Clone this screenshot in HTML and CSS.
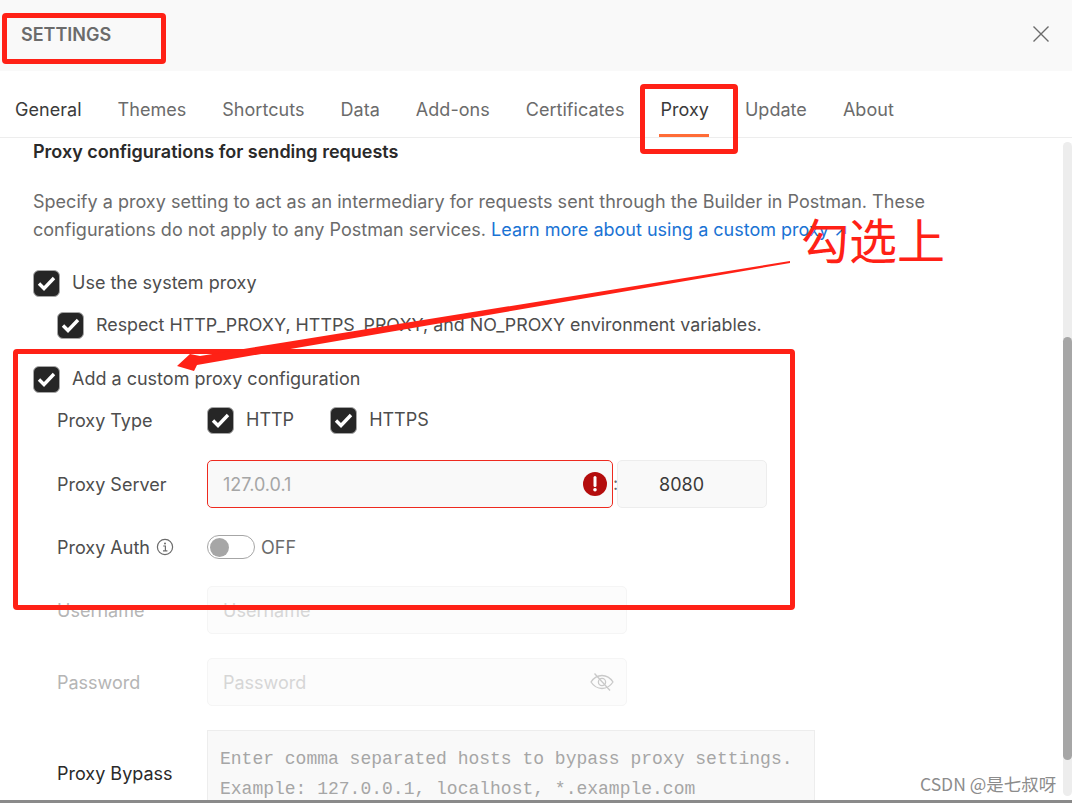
FILE: index.html
```html
<!DOCTYPE html>
<html lang="en">
<head>
<meta charset="utf-8">
<title>Settings</title>
<link rel="stylesheet" href="styles.css">
</head>
<body>
<div class="app">
  <header class="header">
    <span class="title">SETTINGS</span>
    <svg class="close" width="18" height="18" viewBox="0 0 18 18"><path d="M1.500 1.500 16.500 16.500M16.500 1.500 1.500 16.500" stroke="#6b6b6b" stroke-width="1.400" fill="none"/></svg>
  </header>
  <nav class="tabs">
    <a class="tab tab-first">General</a>
    <a class="tab">Themes</a>
    <a class="tab">Shortcuts</a>
    <a class="tab">Data</a>
    <a class="tab">Add-ons</a>
    <a class="tab">Certificates</a>
    <a class="tab tab-active">Proxy</a>
    <a class="tab">Update</a>
    <a class="tab">About</a>
  </nav>
  <main class="content">
    <h2 class="heading">Proxy configurations for sending requests</h2>
    <p class="desc">Specify a proxy setting to act as an intermediary for requests sent through the Builder in Postman. These configurations do not apply to any Postman services. <a class="link">Learn more about using a custom proxy ↗</a></p>
    <label class="check check-system"><span class="box"><svg width="25" height="25" viewBox="0 0 25 25"><path d="M5 12.500 10 17.500 20 7" stroke="#fff" stroke-width="3.400" fill="none"/></svg></span>Use the system proxy</label>
    <label class="check check-respect"><span class="box"><svg width="25" height="25" viewBox="0 0 25 25"><path d="M5 12.500 10 17.500 20 7" stroke="#fff" stroke-width="3.400" fill="none"/></svg></span>Respect HTTP_PROXY, HTTPS_PROXY, and NO_PROXY environment variables.</label>
    <label class="check check-custom"><span class="box"><svg width="25" height="25" viewBox="0 0 25 25"><path d="M5 12.500 10 17.500 20 7" stroke="#fff" stroke-width="3.400" fill="none"/></svg></span>Add a custom proxy configuration</label>
    <div class="form">
      <div class="row row-type">
        <span class="label">Proxy Type</span>
        <div class="types">
          <label class="check"><span class="box"><svg width="25" height="25" viewBox="0 0 25 25"><path d="M5 12.500 10 17.500 20 7" stroke="#fff" stroke-width="3.400" fill="none"/></svg></span>HTTP</label>
          <label class="check"><span class="box"><svg width="25" height="25" viewBox="0 0 25 25"><path d="M5 12.500 10 17.500 20 7" stroke="#fff" stroke-width="3.400" fill="none"/></svg></span>HTTPS</label>
        </div>
      </div>
      <div class="row row-server">
        <span class="label">Proxy Server</span>
        <div class="input input-error"><span class="ph">127.0.0.1</span>
          <svg class="err" width="26" height="26" viewBox="0 0 26 26"><circle cx="13" cy="13" r="12" fill="#b40d0d"/><path d="M13 6.500v8" stroke="#fff" stroke-width="3" stroke-linecap="round"/><circle cx="13" cy="18.700" r="1.800" fill="#fff"/></svg>
        </div>
        <span class="colon">:</span>
        <div class="input input-port">8080</div>
      </div>
      <div class="row row-auth">
        <span class="label">Proxy Auth <svg class="info" width="18" height="18" viewBox="0 0 18 18"><circle cx="9" cy="9" r="7.600" fill="none" stroke="#6b6b6b" stroke-width="1.200"/><path d="M7.200 8h2.200v4.600M7 12.800h4.400" stroke="#6b6b6b" stroke-width="1.200" fill="none"/><circle cx="9" cy="5.500" r="1" fill="#6b6b6b"/></svg></span>
        <span class="toggle"><span class="knob"></span></span>
        <span class="off">OFF</span>
      </div>
      <div class="row row-user disabled">
        <span class="label">Username</span>
        <div class="input input-wide"><span class="ph">Username</span></div>
      </div>
      <div class="row row-pass disabled">
        <span class="label">Password</span>
        <div class="input input-wide"><span class="ph">Password</span>
          <svg class="eye" width="24" height="20" viewBox="0 0 24 20"><path d="M1 10C4 5.500 8 3.500 12 3.500S20 5.500 23 10C20 14.500 16 16.500 12 16.500S4 14.500 1 10Z" fill="none" stroke="#c9c9c9" stroke-width="1.300"/><circle cx="12" cy="10" r="3.600" fill="none" stroke="#c9c9c9" stroke-width="1.300"/><path d="M4.500 1.500 20 18.500" stroke="#c9c9c9" stroke-width="1.300"/></svg>
        </div>
      </div>
      <div class="row row-bypass">
        <span class="label label-dark">Proxy Bypass</span>
        <div class="textarea">Enter comma separated hosts to bypass proxy settings.<br>Example: 127.0.0.1, localhost, *.example.com</div>
      </div>
    </div>
  </main>
  <div class="scrolltrack"><div class="scrollthumb"></div></div>
  <div class="bottomline"></div>
</div>
<div class="mark mark-title"></div>
<div class="mark mark-tab"></div>
<div class="mark mark-form"></div>
<svg class="arrow" width="630" height="120" viewBox="0 0 630 120"><polygon points="620,6 30,101 20,99 7,111 24,116 27,110 620,8" fill="#ff2116"/></svg>
<span class="note">勾选上</span>
<span class="watermark">CSDN @是七叔呀</span>
</body>
</html>
```
FILE: styles.css
```css
* { box-sizing: border-box; }
html, body { margin: 0; height: 803px; overflow: hidden; background: #fff; }
body { font-family: Inter, "Noto Sans CJK SC", sans-serif; font-size: 18px; color: #6b6b6b; position: relative; }
.app { position: relative; width: 1072px; height: 803px; overflow: hidden; display: flex; flex-direction: column; }
.header { height: 71px; flex: none; background: #f9f9f9; display: flex; justify-content: space-between; align-items: flex-start; padding: 25px 22px 0 21px; }
.title { font-weight: 600; line-height: 20px; color: #6b6b6b; }
.tabs { height: 67px; flex: none; border-bottom: 1px solid #ededed; display: flex; gap: 36px; padding-left: 15px; }
.tab { height: 66px; line-height: 77px; color: #6b6b6b; letter-spacing: 0.035px; }
.tab-first { color: #3a3a3a; }
.tab-active { color: #3a3a3a; position: relative; }
.tab-active::after { content: ""; position: absolute; left: -1px; right: 0; bottom: 0; height: 3px; background: #ff6c37; }
.content { flex: 1; padding: 0 0 0 33px; min-height: 0; }
.heading { margin: 4px 0 0; font-size: 18px; line-height: 20px; font-weight: 600; color: #2a2a2a; }
.desc { margin: 26px 0 0; width: 930px; line-height: 28px; letter-spacing: 0.020px; }
.link { color: #1a73d4; letter-spacing: 0; }
.check { display: flex; align-items: center; gap: 12px; color: #4d4d4d; line-height: 28px; }
.check-system { margin-top: 25px; height: 28px; }
.check-respect { margin: 14px 0 0 24px; height: 28px; font-size: 17.850px; }
.check-custom { margin-top: 26px; height: 28px; }
.box { width: 27px; height: 27px; flex: none; border-radius: 6px; background: #262626; border: 1px solid #a6a6a6; display: flex; align-items: center; justify-content: center; }
.box svg { flex: none; }
.form { padding-left: 24px; }
.row { display: flex; align-items: center; }
.label { width: 150px; flex: none; color: #4d4d4d; display: flex; align-items: center; gap: 6px; }
.row-type { margin-top: 13px; height: 28px; }
.types { display: flex; gap: 36px; }
.row-server { margin-top: 26px; height: 48px; }
.input { position: relative; height: 48px; border-radius: 5px; background: #f9f9f9; border: 1px solid #ededed; display: flex; align-items: center; padding-left: 15px; }
.input-error { width: 406px; border-color: #ee2a1f; }
.ph { color: #a6a6a6; }
.err { position: absolute; right: 4px; top: 10px; }
.colon { width: 4px; line-height: 48px; }
.input-port { width: 150px; padding-left: 41px; color: #3a3a3a; }
.row-auth { margin-top: 15px; height: 48px; }
.toggle { width: 48px; height: 24px; border-radius: 12px; border: 1px solid #a6a6a6; display: flex; align-items: center; padding-left: 2px; }
.knob { width: 19px; height: 19px; border-radius: 50%; background: #a6a6a6; }
.off { margin-left: 6px; color: #6b6b6b; }
.info { flex: none; }
.row-user { margin-top: 15px; height: 48px; }
.row-pass { margin-top: 24px; height: 48px; }
.input-wide { width: 420px; background: #fcfcfc; border-color: #f5f5f5; }
.disabled .label { color: #b5b5b5; }
.disabled .ph { color: #d6d6d6; }
.eye { position: absolute; right: 12px; top: 13px; }
.row-bypass { margin-top: 24px; height: 120px; align-items: flex-start; }
.row-bypass .label { margin-top: 33px; }
.row-bypass .label-dark { color: #2a2a2a; }
.textarea { width: 608px; height: 120px; background: #f9f9f9; border: 1px solid #ededed; padding: 13px 12px; font-family: "Liberation Mono", "DejaVu Sans Mono", monospace; font-size: 18px; line-height: 30px; color: #a6a6a6; white-space: nowrap; }
.scrolltrack { position: absolute; left: 1063px; top: 142px; width: 9px; height: 654px; background: #ededed; border-radius: 5px; }
.scrollthumb { position: absolute; left: 0; top: 195px; width: 9px; height: 423px; background: #a6a6a6; border-radius: 5px; }
.bottomline { position: absolute; left: 0; right: 0; bottom: 0; height: 3px; background: #8a8a8a; }
.mark { position: absolute; border: 5px solid #ff2116; border-radius: 4px; }
.mark-title { left: 2px; top: 13px; width: 164px; height: 51px; }
.mark-tab { left: 640px; top: 84px; width: 98px; height: 70px; }
.mark-form { left: 13px; top: 349px; width: 782px; height: 261px; }
.arrow { position: absolute; left: 170px; top: 255px; }
.note { position: absolute; left: 801px; top: 203px; font-family: "Noto Sans CJK SC", sans-serif; font-size: 48px; line-height: 70px; color: #ff2116; }
.watermark { position: absolute; left: 920px; top: 774px; font-family: "Noto Sans CJK SC", sans-serif; font-size: 17.500px; line-height: 20px; color: #8c8c8c; }
```
